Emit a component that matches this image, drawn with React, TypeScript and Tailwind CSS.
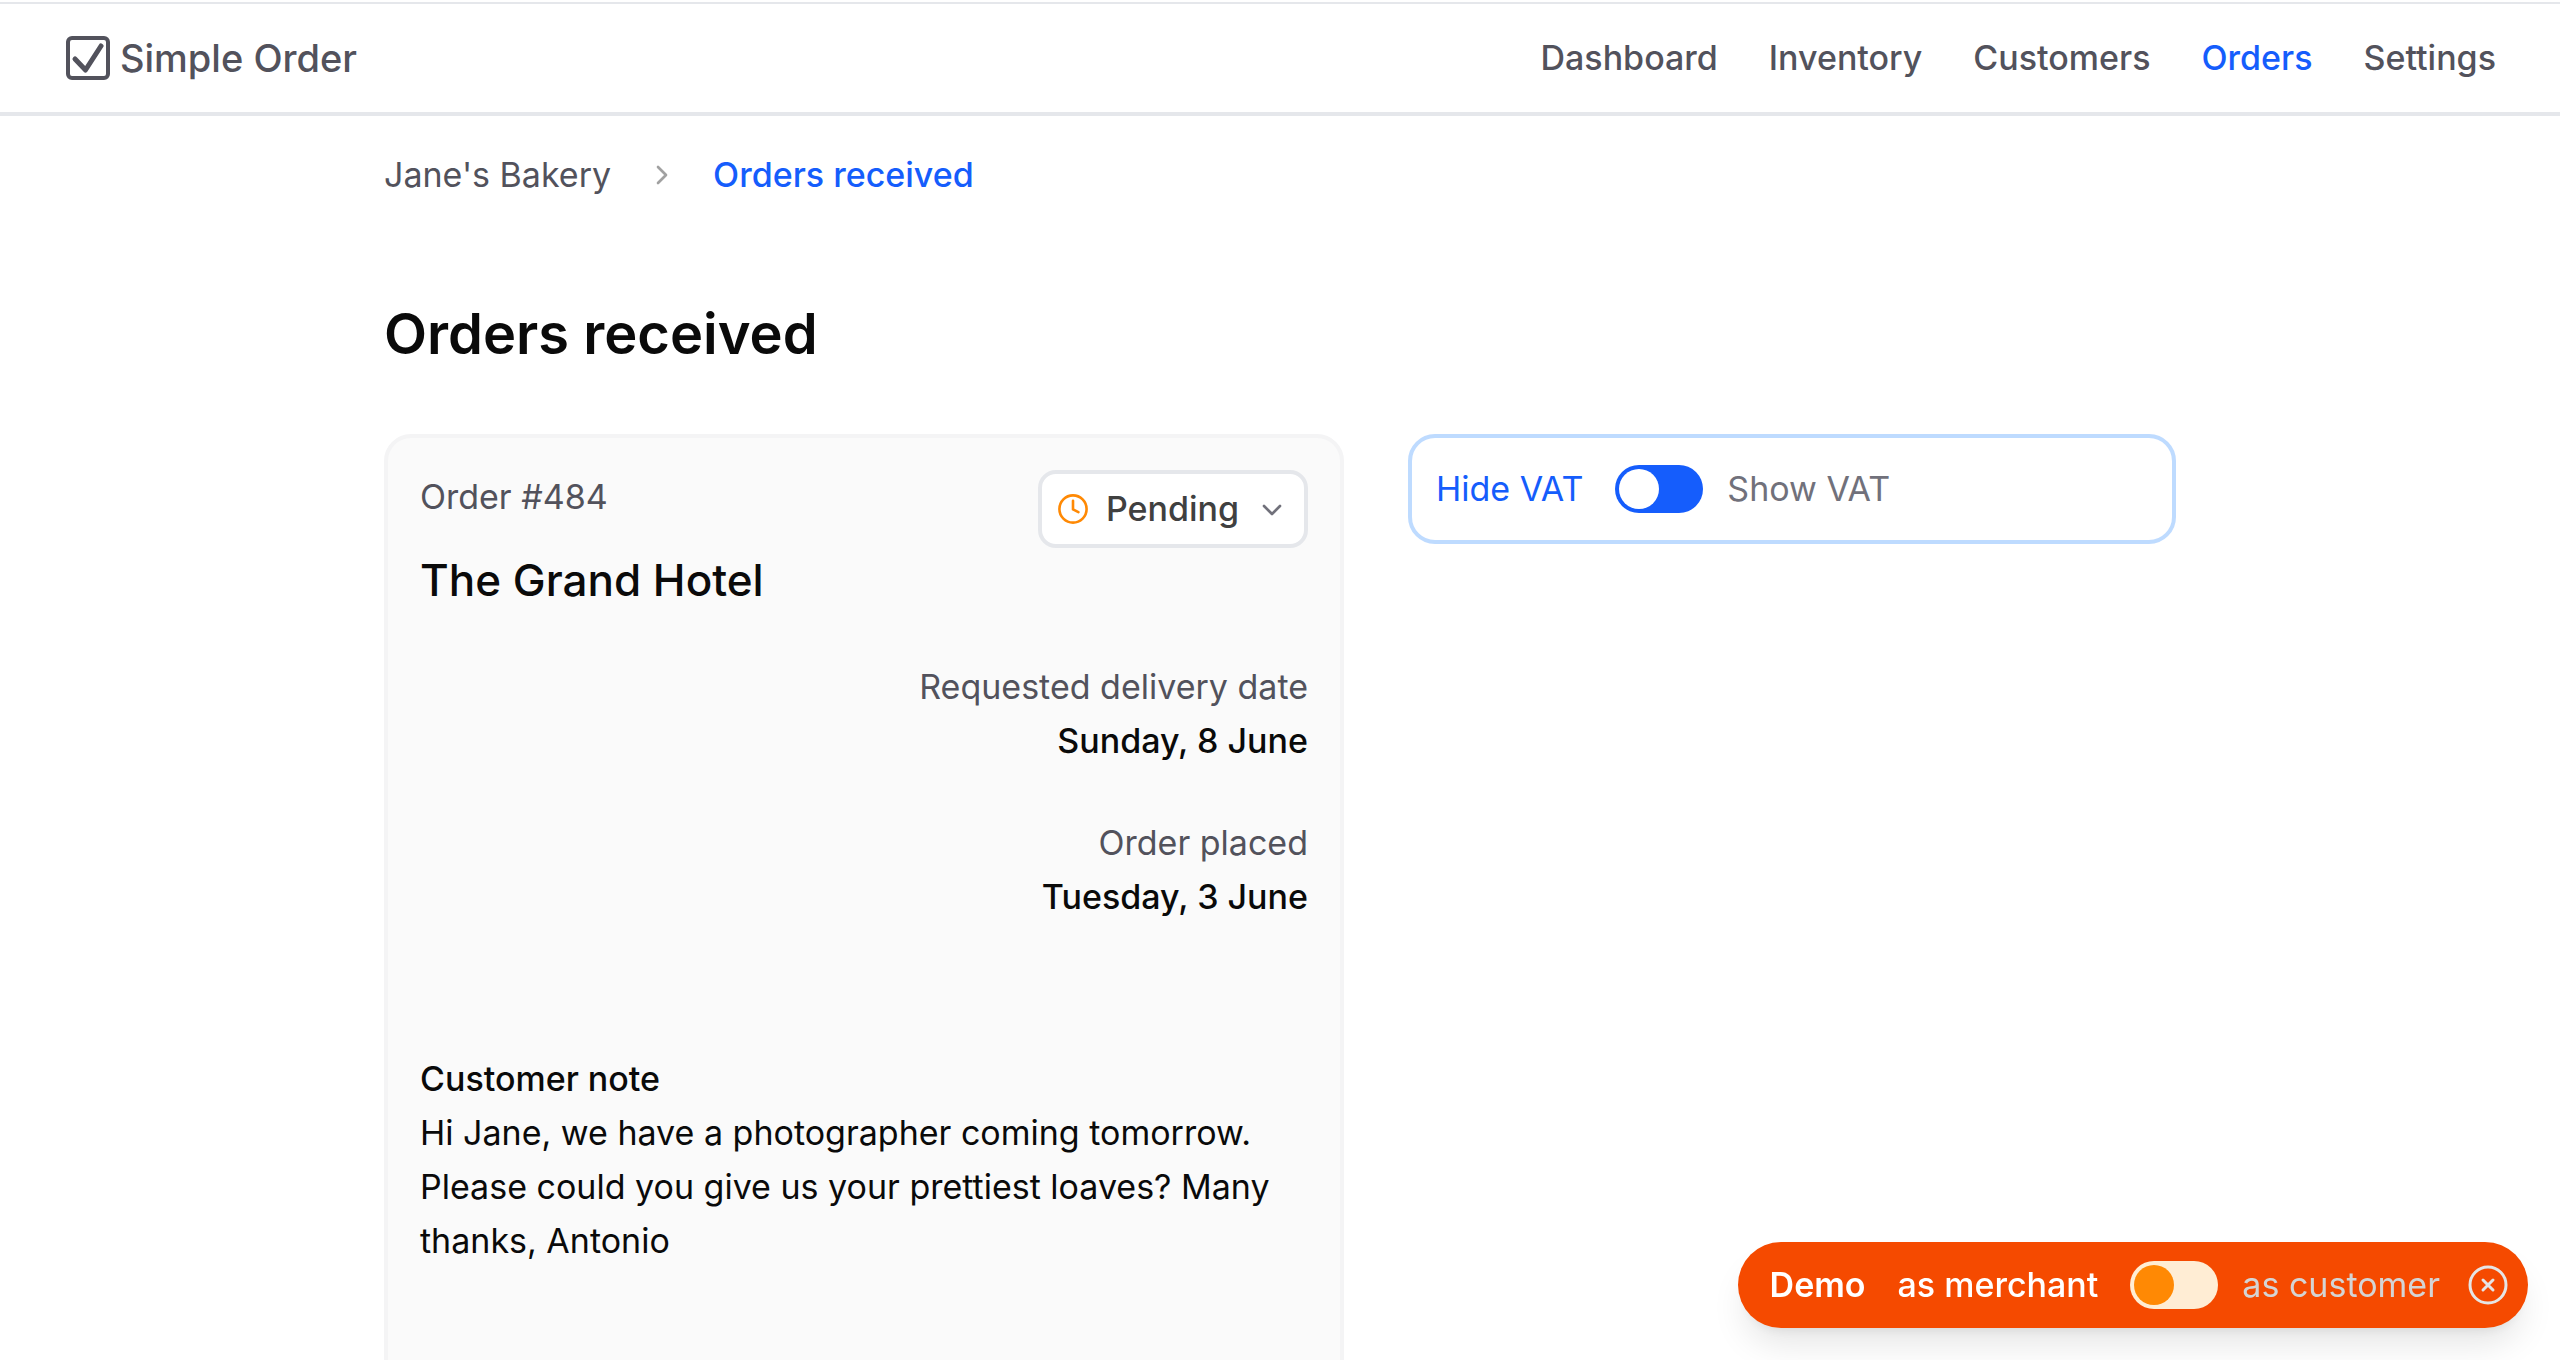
import { useState } from "react";
import { ChevronDown, ChevronRight } from "lucide-react";

const navItems = ["Dashboard", "Inventory", "Customers", "Orders", "Settings"];

const statuses = ["Pending", "Ready", "Delivered"];

function Logo() {
  return (
    <a href="#" className="flex items-center gap-2 text-[38px] leading-[54px] font-medium text-zinc-600">
      <svg viewBox="-2 -2 48 48" className="size-12" fill="none" stroke="currentColor" aria-hidden="true">
        <rect x="2" y="2" width="40" height="40" rx="4" strokeWidth="4" />
        <path d="M9 23l10.5 11L35 10" strokeWidth="5" strokeLinecap="round" strokeLinejoin="round" />
      </svg>
      Simple Order
    </a>
  );
}

function Header() {
  return (
    <header className="flex items-center justify-between border-t-2 border-b-4 border-gray-200 px-16 py-[27px]">
      <Logo />
      <nav className="flex gap-[51px]">
        {navItems.map((item) => (
          <a
            key={item}
            href="#"
            className={item === "Orders" ? "font-medium text-blue-600" : "font-medium text-zinc-600"}
          >
            {item}
          </a>
        ))}
      </nav>
    </header>
  );
}

function Breadcrumbs() {
  return (
    <nav aria-label="Breadcrumb" className="flex items-center gap-[35px]">
      <a href="#" className="text-zinc-600">
        Jane's Bakery
      </a>
      <ChevronRight className="size-8 text-neutral-400" strokeWidth={2} />
      <a href="#" className="font-medium text-blue-600">
        Orders received
      </a>
    </nav>
  );
}

function StatusSelect() {
  const [status, setStatus] = useState("Pending");

  return (
    <div className="relative">
      <select
        aria-label="Order status"
        value={status}
        onChange={(e) => setStatus(e.target.value)}
        className="block h-[78px] w-[270px] appearance-none rounded-[18px] border-4 border-gray-200 bg-white pl-16 font-medium text-neutral-700"
      >
        {statuses.map((s) => (
          <option key={s}>{s}</option>
        ))}
      </select>
      <svg
        viewBox="0 0 30 30"
        className="pointer-events-none absolute top-6 left-5 size-[30px] text-[#ff8904]"
        fill="none"
        stroke="currentColor"
        strokeWidth="2.6"
        strokeLinecap="round"
        strokeLinejoin="round"
        aria-hidden="true"
      >
        <circle cx="15" cy="15" r="13.6" />
        <path d="M15 6.8v8.6l5.4 2.7" />
      </svg>
      <ChevronDown className="pointer-events-none absolute top-6 right-5 size-8 text-zinc-500" strokeWidth={2} />
    </div>
  );
}

function OrderCard() {
  return (
    <article className="rounded-[27px] border-4 border-zinc-100 bg-neutral-50 px-8 pt-8 pb-32">
      <div className="flex items-start justify-between">
        <p className="text-zinc-600">Order #484</p>
        <StatusSelect />
      </div>
      <h2 className="text-[44px] leading-[64px] font-medium">The Grand Hotel</h2>

      <dl className="mt-12 flex flex-col gap-12 text-right">
        <div>
          <dt className="text-zinc-600">Requested delivery date</dt>
          <dd className="font-medium">Sunday, 8 June</dd>
        </div>
        <div>
          <dt className="text-zinc-600">Order placed</dt>
          <dd className="font-medium">Tuesday, 3 June</dd>
        </div>
      </dl>

      <div className="mt-32">
        <h3 className="font-medium">Customer note</h3>
        <p>
          Hi Jane, we have a photographer coming tomorrow. Please could you give us your prettiest
          loaves? Many thanks, Antonio
        </p>
      </div>
    </article>
  );
}

function VatToggle() {
  const [showVat, setShowVat] = useState(false);

  return (
    <label className="flex h-[110px] items-center rounded-[27px] border-4 border-blue-200 px-6">
      <span className={showVat ? "text-zinc-500" : "text-blue-600"}>Hide VAT</span>
      <input
        type="checkbox"
        role="switch"
        aria-label="Show VAT"
        checked={showVat}
        onChange={(e) => setShowVat(e.target.checked)}
        className="mr-6 ml-8 h-12 w-[88px] shrink-0 appearance-none rounded-full bg-blue-600 p-1 before:block before:size-10 before:rounded-full before:bg-white checked:before:translate-x-10"
      />
      <span className={showVat ? "text-blue-600" : "text-zinc-500"}>Show VAT</span>
    </label>
  );
}

function DemoBar() {
  const [isCustomer, setIsCustomer] = useState(false);
  const [isOpen, setIsOpen] = useState(true);

  if (!isOpen) {
    return null;
  }

  return (
    <div className="fixed right-8 bottom-8 flex h-[86px] items-center rounded-full bg-orange-600 pr-5 pl-8 text-white shadow-[0_22px_34px_-6px_rgba(0,0,0,0.1),0_9px_14px_-9px_rgba(0,0,0,0.1)]">
      <span className="mr-8 font-semibold">Demo</span>
      <label className="flex items-center">
        <span className={isCustomer ? "font-medium text-neutral-300" : "font-medium"}>as merchant</span>
        <input
          type="checkbox"
          role="switch"
          aria-label="View as customer"
          checked={isCustomer}
          onChange={(e) => setIsCustomer(e.target.checked)}
          className="mr-6 ml-8 h-12 w-[88px] shrink-0 appearance-none rounded-full bg-orange-100 p-1 before:block before:size-10 before:rounded-full before:bg-[#ff8904] checked:before:translate-x-10"
        />
        <span className={isCustomer ? "font-medium" : "text-neutral-300"}>as customer</span>
      </label>
      <button type="button" aria-label="Close" onClick={() => setIsOpen(false)} className="ml-7 text-neutral-200">
        <svg viewBox="0 0 40 40" className="size-10" fill="none" stroke="currentColor" strokeWidth="3" strokeLinecap="round">
          <circle cx="20" cy="20" r="18" />
          <path d="M15 15l10 10M25 15l-10 10" />
        </svg>
      </button>
    </div>
  );
}

export default function App() {
  return (
    <div className="h-screen overflow-hidden bg-white pt-0.5 font-['Inter',sans-serif] text-[34px] leading-[54px] text-neutral-950">
      <Header />
      <main className="mx-auto max-w-[1792px] pt-8">
        <Breadcrumbs />
        <h1 className="mt-24 text-[56px] leading-[72px] font-semibold">Orders received</h1>
        <div className="mt-16 grid grid-cols-[5fr_4fr] items-start gap-16">
          <OrderCard />
          <VatToggle />
        </div>
      </main>
      <DemoBar />
    </div>
  );
}
